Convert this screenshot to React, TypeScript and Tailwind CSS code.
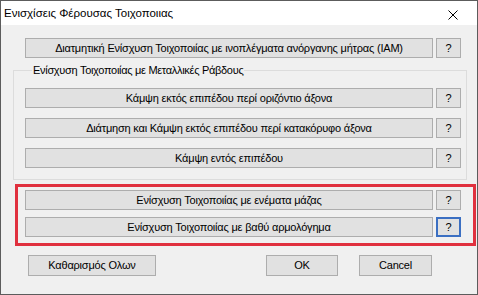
import React from 'react';

function Btn({ label, className = '' }: { label: string; className?: string }) {
  return (
    <button
      type="button"
      className={`h-[20px] bg-[#e1e1e1] border border-[#adadad] text-black text-[11px] tracking-[-0.2px] leading-none whitespace-nowrap flex items-center justify-center ${className}`}
    >
      {label}
    </button>
  );
}

function HelpBtn({ focused = false }: { focused?: boolean }) {
  return (
    <button
      type="button"
      className={`w-[25px] h-[20px] bg-[#e1e1e1] text-black text-[11px] leading-none flex items-center justify-center ${
        focused ? 'border-2 border-[#3b6fc2]' : 'border border-[#adadad]'
      }`}
    >
      ?
    </button>
  );
}

function Row({ label, focused = false }: { label: string; focused?: boolean }) {
  return (
    <div className="flex gap-[3px]">
      <Btn label={label} className="w-[408px]" />
      <HelpBtn focused={focused} />
    </div>
  );
}

export default function App() {
  return (
    <div className="w-[478px] h-[295px] border border-[#5c5c5c] bg-[#f0f0f0] flex flex-col font-['Liberation_Sans',Arial,sans-serif] text-[11px] text-black overflow-hidden">
      {/* title bar */}
      <div className="h-[24px] bg-white flex items-center justify-between pl-[3px] pr-[19px] shrink-0">
        <span className="text-[11.5px] pt-[2px]">Ενισχίσεις Φέρουσας Τοιχοποιιας</span>
        <svg width="10" height="10" viewBox="0 0 10 10" className="mt-[3px]">
          <path d="M0.5 0.5 L9.5 9.5 M9.5 0.5 L0.5 9.5" stroke="#000" strokeWidth="1" fill="none" />
        </svg>
      </div>

      <div className="flex flex-col">
        <div className="mt-[13px] ml-[24px]">
          <Row label="Διατμητική Ενίσχυση Τοιχοποιίας με ινοπλέγματα ανόργανης μήτρας (IAM)" />
        </div>

        <fieldset className="mt-[4px] ml-[12px] w-[454px] border border-[#dcdcdc] pl-[11px] pb-[11px] flex flex-col gap-[10px]">
          <legend className="ml-[7px] px-[1px] leading-[16px] tracking-[-0.3px]">Ενίσχυση Τοιχοποιίας με Μεταλλικές Ράβδους</legend>
          <div className="mt-[10px]">
            <Row label="Κάμψη εκτός επιπέδου περί οριζόντιο άξονα" />
          </div>
          <Row label="Διάτμηση και Κάμψη εκτός επιπέδου περί κατακόρυφο άξονα" />
          <Row label="Κάμψη εντός επιπέδου" />
        </fieldset>

        <div className="mt-[4px] ml-[14px] w-[461px] border-[3px] border-[#e0303e] pl-[7px] pt-[3px] pb-[6px] flex flex-col gap-[7px]">
          <Row label="Ενίσχυση Τοιχοποιίας με ενέματα μάζας" />
          <Row label="Ενίσχυση Τοιχοποιίας με βαθύ αρμολόγημα" focused />
        </div>

        <div className="mt-[9px] flex items-center">
          <Btn label="Καθαρισμός Ολων" className="ml-[27px] w-[128px] h-[21px]" />
          <Btn label="OK" className="ml-[110px] w-[72px] h-[21px]" />
          <Btn label="Cancel" className="ml-[21px] w-[73px] h-[21px]" />
        </div>
      </div>
    </div>
  );
}
